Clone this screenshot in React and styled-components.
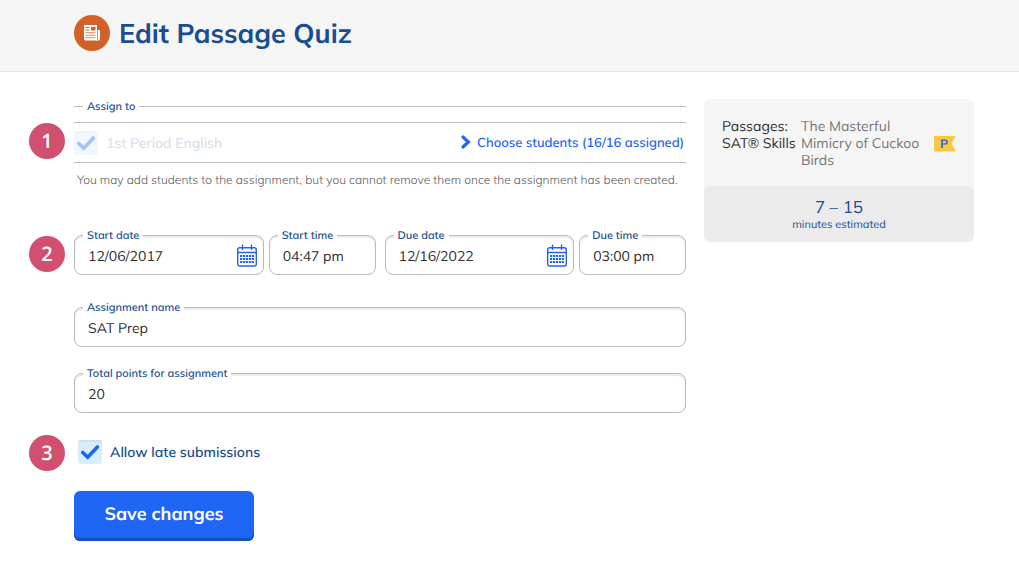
import { useState } from "react";
import styled, { createGlobalStyle } from "styled-components";

const GlobalStyle = createGlobalStyle`
  *{
    box-sizing: border-box;
  }

  body{
    margin: 0;
    background-color: #FFFFFF;
    color: #2E2E2E;
    font-family: Mulish, Muli, 'Lato', sans-serif;
    font-size: 14px;
    text-rendering: geometricPrecision;
  }

  input, button{
    font-family: inherit;
    text-rendering: inherit;
  }
`

export default function App(){
  const [startDate, setStartDate] = useState('12/06/2017');
  const [startTime, setStartTime] = useState('04:47 pm');
  const [dueDate, setDueDate] = useState('12/16/2022');
  const [dueTime, setDueTime] = useState('03:00 pm');
  const [name, setName] = useState('SAT Prep');
  const [points, setPoints] = useState('20');
  const [allowLate, setAllowLate] = useState(true);

  return(
    <>
      <GlobalStyle />
      <Header>
        <HeaderIcon>
          <NewsIcon />
        </HeaderIcon>
        <Title>Edit Passage Quiz</Title>
      </Header>
      <Content>
        <Form onSubmit={(e) => e.preventDefault()}>
          <Step>
            <Badge $drop={24}>1</Badge>
            <div>
              <AssignGroup>
                <Legend>Assign to</Legend>
                <ClassRow>
                  <Checkbox id='period' checked disabled />
                  <ClassName htmlFor='period'>1st Period English</ClassName>
                  <ChooseLink href='#students'>
                    <ChevronIcon />
                    Choose students (16/16 assigned)
                  </ChooseLink>
                </ClassRow>
              </AssignGroup>
              <Hint>You may add students to the assignment, but you cannot remove them once the assignment has been created.</Hint>
            </div>
          </Step>
          <Step $space={40}>
            <Badge $drop={8}>2</Badge>
            <DateRow>
              <DatePair>
                <Field id='startDate' label='Start date' value={startDate} onChange={setStartDate} calendar />
                <Field id='startTime' label='Start time' value={startTime} onChange={setStartTime} />
              </DatePair>
              <DatePair>
                <Field id='dueDate' label='Due date' value={dueDate} onChange={setDueDate} calendar />
                <Field id='dueTime' label='Due time' value={dueTime} onChange={setDueTime} />
              </DatePair>
            </DateRow>
          </Step>
          <Step $space={25}>
            <Fields>
              <Field id='name' label='Assignment name' value={name} onChange={setName} />
              <Field id='points' label='Total points for assignment' value={points} onChange={setPoints} />
            </Fields>
          </Step>
          <Step $space={22}>
            <Badge $drop={0}>3</Badge>
            <LateRow>
              <Checkbox id='late' checked={allowLate} onChange={() => setAllowLate(!allowLate)} />
              <LateLabel htmlFor='late'>Allow late submissions</LateLabel>
            </LateRow>
          </Step>
          <Step $space={20}>
            <SaveButton type='submit'>Save changes</SaveButton>
          </Step>
        </Form>
        <Summary>
          <Passage>
            <PassageSet>Passages: SAT® Skills</PassageSet>
            <PassageName>The Masterful Mimicry of Cuckoo Birds</PassageName>
            <Flag>P</Flag>
          </Passage>
          <Estimate>
            <Minutes>7 – 15</Minutes>
            <MinutesLabel>minutes estimated</MinutesLabel>
          </Estimate>
        </Summary>
      </Content>
    </>
  )
}

function Field({ id, label, value, onChange, calendar }){
  return(
    <FieldBox>
      <Legend>
        <label htmlFor={id}>{label}</label>
      </Legend>
      <FieldInner>
        <TextInput
          id={id}
          type='text'
          value={value}
          onChange={(e) => onChange(e.target.value)}
        />
        {calendar && <CalendarIcon />}
      </FieldInner>
    </FieldBox>
  )
}

function Checkbox({ id, checked, disabled, onChange }){
  return(
    <CheckWrapper $disabled={disabled}>
      <CheckInput
        id={id}
        type='checkbox'
        checked={checked}
        disabled={disabled}
        onChange={onChange}
        readOnly={!onChange}
      />
      {checked &&
        <CheckMark width='24' height='24' viewBox='0 0 24 24' fill='none' aria-hidden='true'>
          <path d='M4.700 12.500l5 4.800L19.400 7' stroke='#1F66F5' strokeWidth='3.600' strokeLinecap='round' />
        </CheckMark>
      }
    </CheckWrapper>
  )
}

function NewsIcon(){
  return(
    <svg width='18' height='18' viewBox='0 0 18 18' aria-hidden='true'>
      <path fill='#FFFFFF' d='M1 1h13v15.500H2.500A1.500 1.500 0 0 1 1 15z' />
      <path fill='#FFFFFF' d='M14.700 6H17v9a1.500 1.500 0 0 1-1.500 1.500H13v-1h1.700z' />
      <path fill='none' stroke='#D26127' d='M2.500 3.500h4M2.500 6h4' />
      <path fill='none' stroke='#D26127' strokeOpacity='0.75' d='M2.500 8.700h10M2.500 11.200h10M2.500 13.700h10' />
      <path fill='#D26127' d='M8 3h4.500v3.500H8z' />
    </svg>
  )
}

function ChevronIcon(){
  return(
    <Chevron width='10' height='14' viewBox='0 0 10 14' fill='none' aria-hidden='true'>
      <path d='M2 2L7.300 7L2 12' stroke='#1F66F5' strokeWidth='3.200' strokeLinecap='round' />
    </Chevron>
  )
}

function CalendarIcon(){
  return(
    <Calendar width='20' height='23' viewBox='0 0 20 23' fill='none' stroke='#2563EB' aria-hidden='true'>
      <rect x='0.7' y='3.700' width='18.600' height='18.300' rx='2' strokeWidth='1.400' />
      <path d='M1 8.500h18M5.500 0.500v5.500M14.500 0.500v5.500' strokeWidth='1.400' />
      <path d='M3 12h14M3 15h14M3 18h14' strokeWidth='2.200' strokeDasharray='2.200 0.750' />
    </Calendar>
  )
}

const Header = styled.header`
  display: flex;
  align-items: center;
  gap: 9px;
  height: 72px;
  padding: 0 45px 5px 74px;
  background-color: #F5F5F5;
  border-bottom: 1px solid #E6E6E6;
`

const HeaderIcon = styled.div`
  display: flex;
  align-items: center;
  justify-content: center;
  width: 36px;
  height: 36px;
  border-radius: 50%;
  background-color: #D26127;
`

const Title = styled.h1`
  margin: 0;
  color: #1A4D8F;
  font-size: 27px;
  font-weight: 700;
  line-height: 36px;
`

const Content = styled.main`
  display: grid;
  grid-template-columns: 1fr 270px;
  align-items: start;
  gap: 18px;
  padding: 27px 45px 24px 28px;
`

const Form = styled.form`
  display: flex;
  flex-direction: column;
  min-width: 0;
`

const Step = styled.div`
  display: grid;
  grid-template-columns: 46px 1fr;
  align-items: start;
  margin-top: ${({ $space }) => $space || 0}px;

  > :last-child{
    grid-column: 2;
  }
`

const Badge = styled.div`
  width: 36px;
  height: 36px;
  margin-top: ${({ $drop }) => $drop}px;
  margin-left: 1px;
  border-radius: 50%;
  background-color: #D2506F;
  color: #FFFFFF;
  font-family: 'Open Sans', sans-serif;
  font-size: 20px;
  font-weight: 600;
  line-height: 36px;
  text-align: center;
`

const Legend = styled.legend`
  padding: 0 4px;
  color: #1A4D8F;
  font-size: 11px;
  font-weight: 600;
  line-height: 14px;
`

const AssignGroup = styled.fieldset`
  min-width: 0;
  margin: 0;
  padding: 9px 0 0;
  border: 0;
  border-top: 1px solid #B9B9B9;

  > legend{
    margin-left: 9px;
  }
`

const ClassRow = styled.div`
  display: flex;
  align-items: center;
  gap: 8px;
  height: 41px;
  border-top: 1px solid #B9B9B9;
  border-bottom: 1px solid #B9B9B9;
`

const ClassName = styled.label`
  flex: 1;
  color: #D3DEEB;
  font-size: 14px;
  font-weight: 500;
`

const ChooseLink = styled.a`
  display: flex;
  align-items: center;
  gap: 6px;
  padding-right: 2px;
  color: #1F66F5;
  font-size: 13px;
  font-weight: 600;
  text-decoration: none;
`

const Chevron = styled.svg`
  margin-bottom: 2px;
`

const Hint = styled.p`
  margin: 0 -8px 0 0;
  padding: 9px 0 0 3px;
  color: #5C5C5C;
  font-size: 12px;
  font-weight: 300;
  line-height: 16px;
`

const DateRow = styled.div`
  display: grid;
  grid-template-columns: 1fr 1fr;
  gap: 9px;
`

const DatePair = styled.div`
  display: grid;
  grid-template-columns: 190fr 107fr;
  gap: 5px;
`

const Fields = styled.div`
  display: flex;
  flex-direction: column;
  gap: 19px;
`

const FieldBox = styled.fieldset`
  min-width: 0;
  margin: 0;
  padding: 0 6px 4px 8px;
  border: 1px solid #B9B9B9;
  border-radius: 8px;
  box-shadow: inset 0 2px 1px #EBEBEB;

  > legend{
    background-color: #FFFFFF;
  }
`

const FieldInner = styled.div`
  display: flex;
  align-items: center;
  height: 28px;
`

const TextInput = styled.input`
  flex: 1;
  min-width: 0;
  height: 24px;
  padding: 0 5px;
  border: none;
  background-color: transparent;
  color: #2E2E2E;
  font-size: 14px;

  &:focus{
    outline: none;
  }
`

const Calendar = styled.svg`
  flex-shrink: 0;
  margin-bottom: 2px;
`

const LateRow = styled.div`
  display: flex;
  align-items: center;
  gap: 8px;
  height: 34px;
  padding-left: 4px;
`

const LateLabel = styled.label`
  color: #1A4D8F;
  font-size: 14px;
  font-weight: 600;
`

const CheckWrapper = styled.span`
  display: grid;
  width: 24px;
  height: 24px;
  opacity: ${({ $disabled }) => $disabled ? 0.4 : 1};
`

const CheckInput = styled.input`
  grid-area: 1 / 1;
  width: 24px;
  height: 24px;
  margin: 0;
  border-radius: 3px;
  background-color: #D9EEFD;
  box-shadow: inset 0 2px 1px #CBE0EE;
  appearance: none;
`

const CheckMark = styled.svg`
  grid-area: 1 / 1;
  pointer-events: none;
`

const SaveButton = styled.button`
  justify-self: start;
  width: 180px;
  height: 50px;
  padding: 0 0 6px;
  border: none;
  border-radius: 6px;
  background-color: #1F66F5;
  box-shadow: inset 0 -3px #134FC4;
  color: #FFFFFF;
  font-size: 18px;
  font-weight: 700;
`

const Summary = styled.aside`
  overflow: hidden;
  border-radius: 6px;
  background-color: #F5F5F5;
`

const Passage = styled.div`
  display: grid;
  grid-template-columns: 75px 1fr 22px;
  gap: 4px;
  padding: 19px 18px 17px;
  font-size: 14px;
  line-height: 17px;
`

const PassageSet = styled.div`
  color: #2E2E2E;
`

const PassageName = styled.div`
  padding-right: 4px;
  color: #757575;
`

const Flag = styled.div`
  align-self: center;
  height: 16px;
  padding-left: 6px;
  background-color: #F8C840;
  clip-path: polygon(0 0, 100% 0, 80% 50%, 100% 100%, 0 100%);
  color: #2563EB;
  font-size: 12px;
  font-weight: 700;
  line-height: 16px;
`

const Estimate = styled.div`
  padding: 12px 18px 11px;
  border-radius: 6px;
  background-color: #EBEBEB;
  color: #1A4D8F;
  text-align: center;
`

const Minutes = styled.div`
  font-size: 17px;
  line-height: 19px;
`

const MinutesLabel = styled.div`
  font-size: 11px;
  line-height: 14px;
`
